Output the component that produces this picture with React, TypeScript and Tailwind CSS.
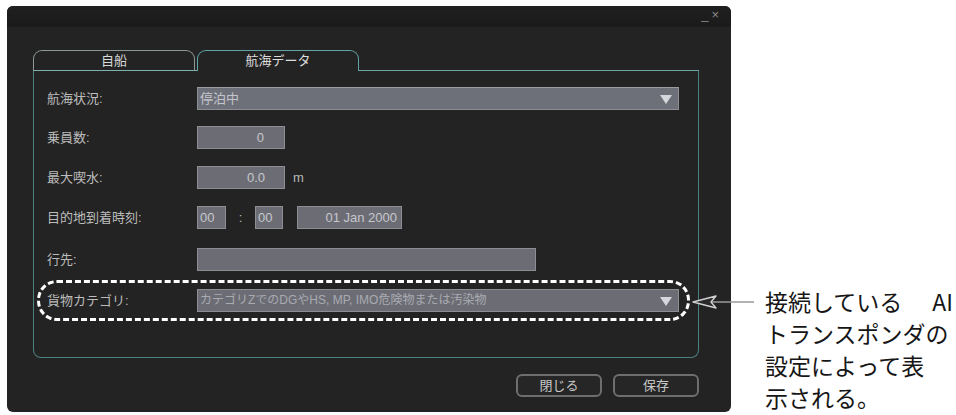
import React from "react";

const Box = ({ w, children, justify = "justify-start", cls = "" }: { w: string; children?: React.ReactNode; justify?: string; cls?: string }) => (
  <div
    className={`${w} h-[23px] bg-[#6c6d74] border border-[#8d8e94] text-[#c6c7cd] text-[13px] leading-[21px] flex items-center ${justify} ${cls}`}
  >
    {children}
  </div>
);

const Tri = () => (
  <svg width="12" height="10" viewBox="0 0 12 10" className="shrink-0">
    <polygon points="0,1 12,1 6,10" fill="#d6d7dc" />
  </svg>
);

const Label = ({ children, w = "w-[163px]", pl = "pl-[13px]" }: { children: React.ReactNode; w?: string; pl?: string }) => (
  <div className={`${w} ${pl} shrink-0 text-[13px] text-[#bcbcbc]`}>{children}</div>
);

export default function App() {
  return (
    <div className="w-[956px] h-[415px] bg-white relative overflow-hidden flex font-['Liberation_Sans','Noto_Sans_CJK_JP',sans-serif]">
      {/* Window */}
      <div className="ml-[7px] mt-[6px] w-[724px] h-[406px] shrink-0 rounded-[6px] bg-[#232323] flex flex-col overflow-hidden">
        {/* title bar */}
        <div className="h-[21px] shrink-0 bg-gradient-to-b from-[#202020] to-[#1a1a1a] border-b border-[#1c1c1c] flex items-start justify-end pr-[12px] gap-[3px] text-[#8a8a8a]">
          <span className="text-[13px] leading-[14px] mt-[2px]">_</span>
          <span className="text-[13px] leading-[13px] mt-[2px]">×</span>
        </div>

        {/* tabs + panel */}
        <div className="ml-[26px] mr-[32px] mt-[23px] flex flex-col">
          <div className="flex h-[21px] items-stretch">
            <div className="w-[162px] border-t border-x border-b border-t-[#8d9898] border-x-[#8d9898] border-b-[#7fb0b0] rounded-t-[9px] flex items-center justify-center text-[13px] text-[#d8d8d8]">
              自船
            </div>
            <div className="w-[2px] border-b border-[#7fb0b0]" />
            <div className="w-[162px] border-t border-x border-[#62a3a3] rounded-t-[9px] flex items-center justify-center text-[13px] text-[#dcdcdc]">
              航海データ
            </div>
            <div className="flex-1 border-b border-[#6aa6a6]" />
          </div>
          <div className="h-[287px] border-x border-b border-[#4d8081] rounded-b-[8px] flex flex-col pt-[16px]">
            {/* row 1 */}
            <div className="flex items-center h-[23px]">
              <Label>航海状況:</Label>
              <Box w="w-[482px]" justify="justify-between" cls="bg-[#6e7079] border-t-[#9a9ca2] pl-[2px] pr-[6px]">
                <span className="text-[#c4c5cc]">停泊中</span>
                <Tri />
              </Box>
            </div>
            {/* row 2 */}
            <div className="flex items-center h-[23px] mt-[16px]">
              <Label>乗員数:</Label>
              <Box w="w-[88px]" justify="justify-end" cls="pr-[20px]">0</Box>
            </div>
            {/* row 3 */}
            <div className="flex items-center h-[23px] mt-[17px]">
              <Label>最大喫水:</Label>
              <Box w="w-[88px]" justify="justify-end" cls="pr-[19px]">0.0</Box>
              <span className="ml-[8px] text-[13px] text-[#b8b8b8]">m</span>
            </div>
            {/* row 4 */}
            <div className="flex items-center h-[23px] mt-[17px]">
              <Label>目的地到着時刻:</Label>
              <Box w="w-[29px]" cls="pl-[2px]">00</Box>
              <span className="w-[29px] text-center text-[13px] text-[#b8b8b8]">:</span>
              <Box w="w-[28px]" cls="pl-[2px]">00</Box>
              <Box w="w-[105px]" justify="justify-end" cls="ml-[14px] pr-[4px]">01 Jan 2000</Box>
            </div>
            {/* row 5 */}
            <div className="flex items-center h-[23px] mt-[19px]">
              <Label>行先:</Label>
              <Box w="w-[339px]" />
            </div>
            {/* row 6 highlighted */}
            <div className="ml-[3px] mt-[9px] w-[653px] h-[41px] rounded-[20px] border-[3px] border-dashed border-white flex items-center">
              <Label w="w-[157px]" pl="pl-[7px]">貨物カテゴリ:</Label>
              <Box w="w-[482px]" justify="justify-between" cls="pl-[2px] pr-[6px]">
                <span className="text-[#a9aab2] text-[12px] whitespace-nowrap">カテゴリZでのDGやHS, MP, IMO危険物または汚染物</span>
                <Tri />
              </Box>
            </div>
          </div>
        </div>

        {/* buttons */}
        <div className="mt-[16px] flex justify-end pr-[32px] gap-[11px]">
          <button className="w-[86px] h-[23px] rounded-[6px] border-2 border-[#6e6e6e] bg-[#262626] text-[13px] text-[#c8c8c8] leading-[19px]">
            閉じる
          </button>
          <button className="w-[86px] h-[23px] rounded-[6px] border-2 border-[#6e6e6e] bg-[#262626] text-[13px] text-[#c8c8c8] leading-[19px]">
            保存
          </button>
        </div>
      </div>

      {/* annotation text */}
      <div className="ml-[34px] mt-[285px] flex flex-col text-[23px] leading-[32px] text-[#161616] font-['Noto_Sans_CJK_JP',sans-serif] whitespace-nowrap">
        <div>
          接続している<span className="ml-[30px]">AI</span>
        </div>
        <div>トランスポンダの</div>
        <div>設定によって表</div>
        <div>示される。</div>
      </div>

      {/* arrow */}
      <svg className="absolute left-[690px] top-[293px]" width="66" height="18" viewBox="0 0 66 18">
        <line x1="20" y1="9" x2="64" y2="9" stroke="#9a9a9a" strokeWidth="1.6" />
        <polygon points="3,9 26,3 21,9 26,15" fill="#2a2a2a" stroke="#d0d0d0" strokeWidth="1.4" strokeLinejoin="round" />
      </svg>
    </div>
  );
}
